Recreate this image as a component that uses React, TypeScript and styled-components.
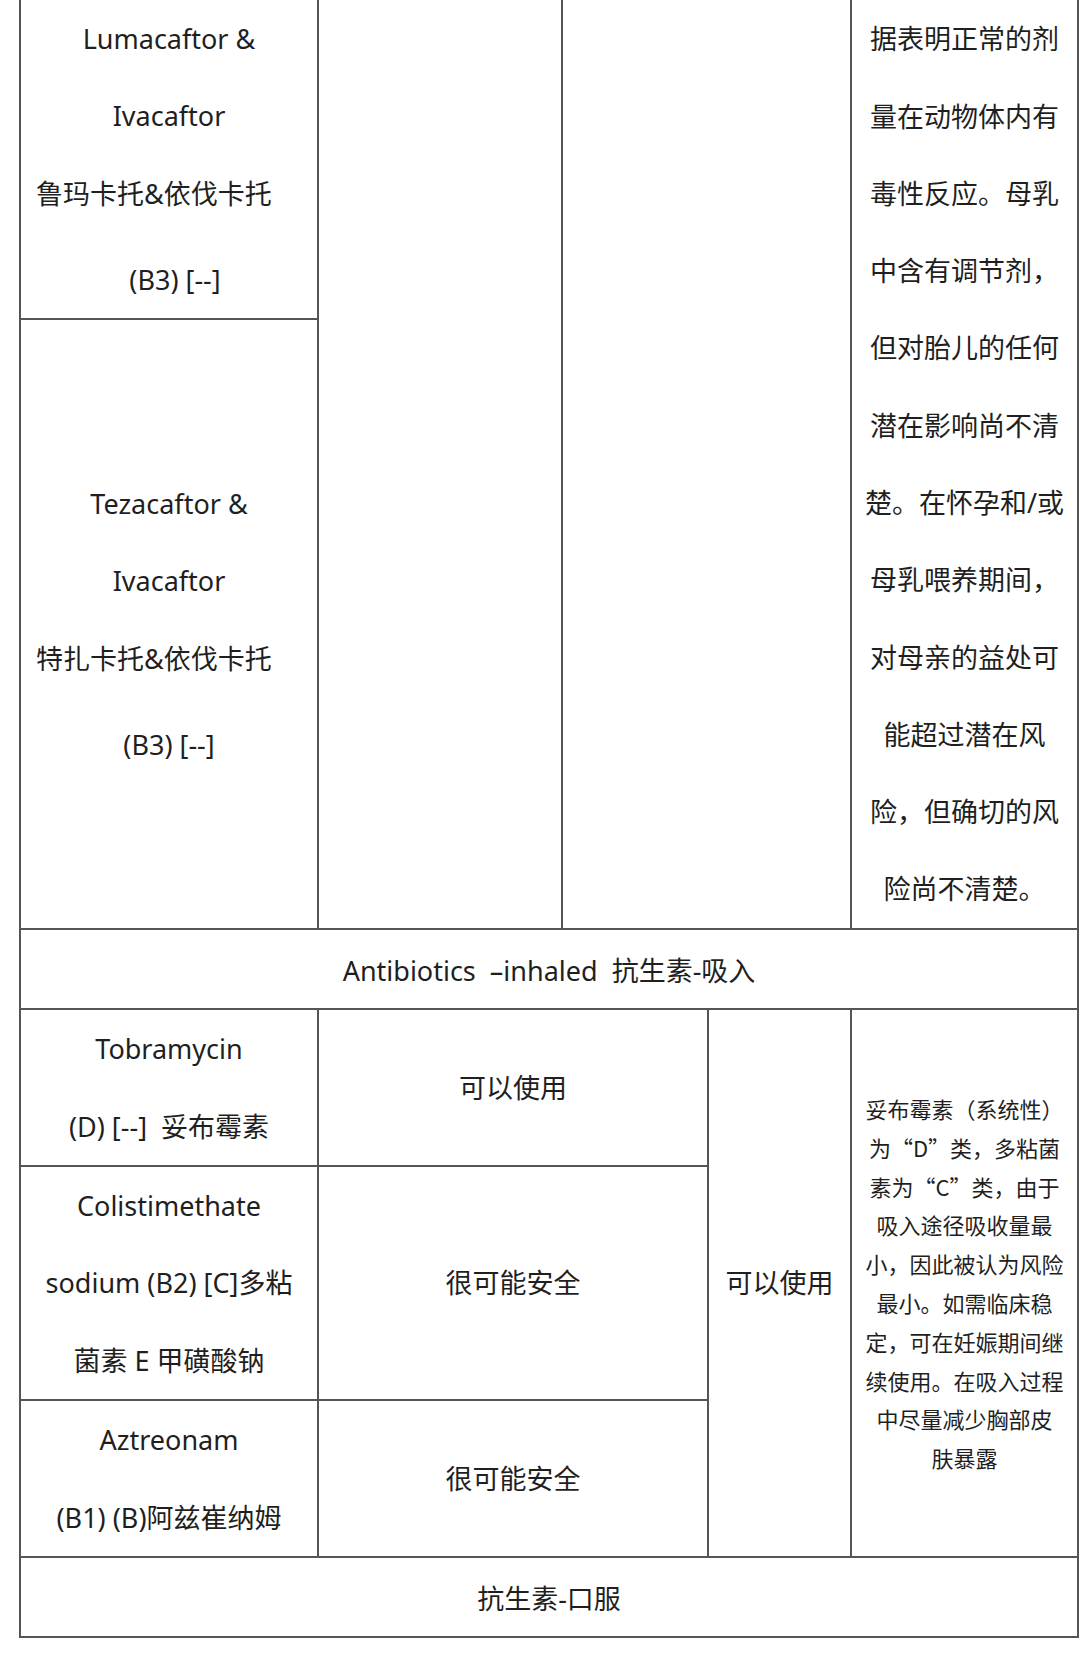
import * as React from 'react';
import styled, { createGlobalStyle } from 'styled-components';

const GlobalStyle = createGlobalStyle`
	html, body {
		margin: 0;
		padding: 0;
		background: #ffffff;
	}
	body {
		font-family: 'Noto Sans', 'Noto Sans CJK SC', sans-serif;
		color: #1f1f1f;
		font-size: 27px;
	}
`;

const LINE = '#555555';

const Page = styled.div`
	width: 1080px;
	height: 1657px;
	padding-left: 19px;
	box-sizing: border-box;
`;

const Table = styled.div`
	width: 1060px;
	border-left: 2px solid ${LINE};
	box-sizing: border-box;
`;

const Grid = styled.div<{ $cols: string; $rows: string }>`
	display: grid;
	grid-template-columns: ${(p) => p.$cols};
	grid-template-rows: ${(p) => p.$rows};
`;

const Cell = styled.div<{ $row?: string; $col?: string }>`
	grid-row: ${(p) => p.$row || 'auto'};
	grid-column: ${(p) => p.$col || 'auto'};
	border-right: 2px solid ${LINE};
	border-bottom: 2px solid ${LINE};
	box-sizing: border-box;
	display: flex;
	flex-direction: column;
	justify-content: center;
	align-items: center;
	text-align: center;
`;

const Line = styled.span<{ $shift?: number; $gap?: number }>`
	display: block;
	line-height: 77.3px;
	white-space: pre;
	margin-top: ${(p) => p.$gap || 0}px;
	padding-left: ${(p) => (p.$shift && p.$shift > 0 ? p.$shift * 2 : 0)}px;
	padding-right: ${(p) => (p.$shift && p.$shift < 0 ? -p.$shift * 2 : 0)}px;
`;

const NoteText = styled.div`
	font-family: 'Noto Sans CJK SC', 'Noto Sans', sans-serif;
	font-size: 22px;
	line-height: 38.8px;
	width: 100%;
`;

const NoteLine = styled.span`
	display: block;
	white-space: pre;
`;

const Heading = styled.div<{ $h: number }>`
	height: ${(p) => p.$h}px;
	border-right: 2px solid ${LINE};
	border-bottom: 2px solid ${LINE};
	box-sizing: border-box;
	display: flex;
	align-items: center;
	justify-content: center;
	white-space: pre;
`;

const cfNote = [
	'据表明正常的剂',
	'量在动物体内有',
	'毒性反应。母乳',
	'中含有调节剂，',
	'但对胎儿的任何',
	'潜在影响尚不清',
	'楚。在怀孕和/或',
	'母乳喂养期间，',
	'对母亲的益处可',
	'能超过潜在风',
	'险，但确切的风',
	'险尚不清楚。',
];

const inhaledNote = [
	'妥布霉素（系统性）',
	'为“D”类，多粘菌',
	'素为“C”类，由于',
	'吸入途径吸收量最',
	'小，因此被认为风险',
	'最小。如需临床稳',
	'定，可在妊娠期间继',
	'续使用。在吸入过程',
	'中尽量减少胸部皮',
	'肤暴露',
];

const App = () => {
	return (
		<React.Fragment>
			<GlobalStyle />
			<Page>
				<Table>
					{/* CFTR 调节剂（上接） */}
					<Grid $cols="298px 244px 289px 227px" $rows="320px 610px">
						<Cell $row="1" $col="1">
							<Line>Lumacaftor &amp;</Line>
							<Line>Ivacaftor</Line>
							<Line $shift={-15}>鲁玛卡托&amp;依伐卡托</Line>
							<Line $gap={9} $shift={6}>(B3) [--]</Line>
						</Cell>
						<Cell $row="2" $col="1">
							<Line>Tezacaftor &amp;</Line>
							<Line>Ivacaftor</Line>
							<Line $shift={-15}>特扎卡托&amp;依伐卡托</Line>
							<Line $gap={9}>(B3) [--]</Line>
						</Cell>
						<Cell $row="1 / 3" $col="2" />
						<Cell $row="1 / 3" $col="3" />
						<Cell $row="1 / 3" $col="4">
							{cfNote.map((t) => (
								<Line key={t}>{t}</Line>
							))}
						</Cell>
					</Grid>

					<Heading $h={80}>Antibiotics  –inhaled  抗生素-吸入</Heading>

					<Grid $cols="298px 390px 143px 227px" $rows="157px 234px 157px">
						<Cell $row="1" $col="1">
							<Line>Tobramycin</Line>
							<Line>(D) [--]  妥布霉素</Line>
						</Cell>
						<Cell $row="1" $col="2">
							<Line>可以使用</Line>
						</Cell>
						<Cell $row="2" $col="1">
							<Line>Colistimethate</Line>
							<Line>sodium (B2) [C]多粘</Line>
							<Line>菌素 E 甲磺酸钠</Line>
						</Cell>
						<Cell $row="2" $col="2">
							<Line>很可能安全</Line>
						</Cell>
						<Cell $row="3" $col="1">
							<Line>Aztreonam</Line>
							<Line>(B1) (B)阿兹崔纳姆</Line>
						</Cell>
						<Cell $row="3" $col="2">
							<Line>很可能安全</Line>
						</Cell>
						<Cell $row="1 / 4" $col="3">
							<Line>可以使用</Line>
						</Cell>
						<Cell $row="1 / 4" $col="4">
							<NoteText>
								{inhaledNote.map((t) => (
									<NoteLine key={t}>{t}</NoteLine>
								))}
							</NoteText>
						</Cell>
					</Grid>

					<Heading $h={80}>抗生素-口服</Heading>
				</Table>
			</Page>
		</React.Fragment>
	);
};

export default App;
